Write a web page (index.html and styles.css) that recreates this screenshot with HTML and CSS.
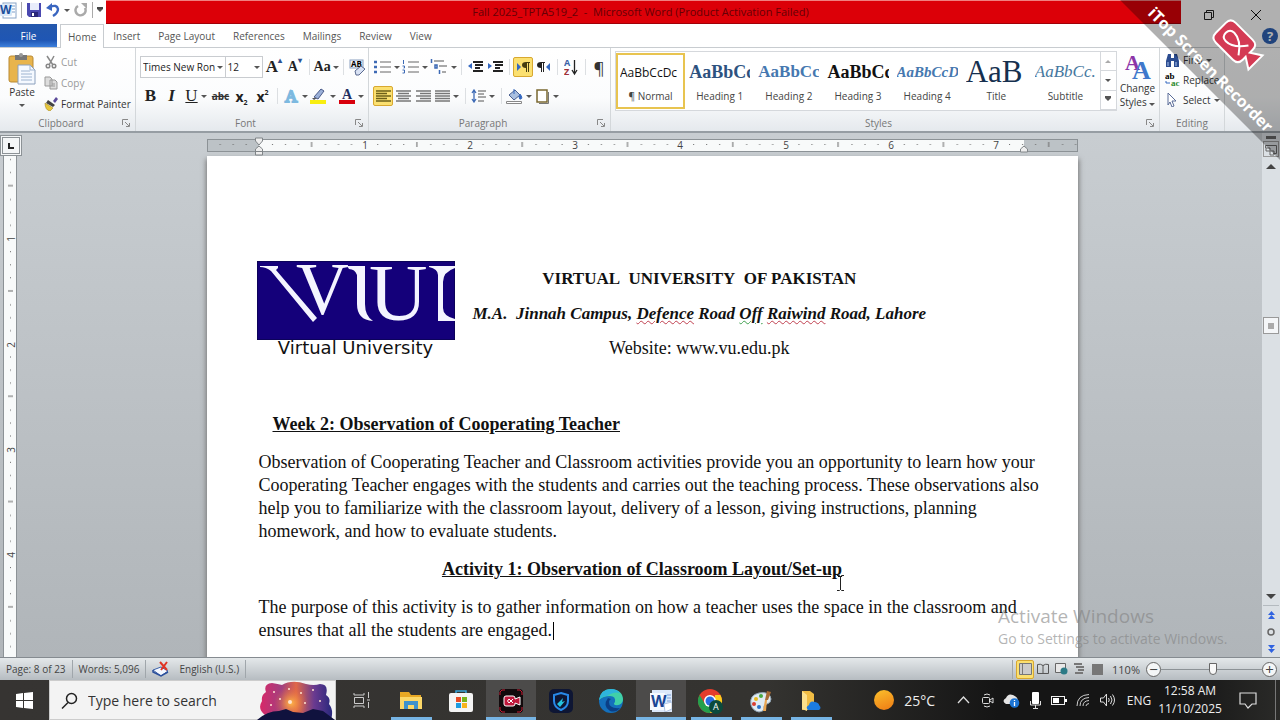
FILE: index.html
```
<!DOCTYPE html>
<html lang="en">
<head>
    <meta charset="UTF-8">
    <meta name="viewport" content="width=device-width, initial-scale=1.0">
    <title>Fall 2025_TPTA519_2 - Microsoft Word</title>
    <link rel="stylesheet" href="styles.css">
</head>
<body>
    <header class="titlebar">
        <div class="quick">
            <svg class="word-icon" width="17" height="17" viewBox="0 0 17 17"><rect x="3" y="1" width="13" height="15" fill="#fff" stroke="#8aa5c8"/><path d="M12 4h3M12 7h3M12 10h3" stroke="#7a9cc8"/><rect x="0" y="2" width="12" height="12" rx="1" fill="#dbe8f8"/><text x="0" y="12" font-size="12" font-weight="bold" fill="#1c4f9c">W</text></svg>
            <span class="bar"></span>
            <button aria-label="Save"><svg width="16" height="16" viewBox="0 0 16 16"><path d="M1 1h14v14H3l-2-2z" fill="#4a48b0"/><path d="M4 1h9v7H4z" fill="#e8ecfb"/><path d="M5 10h7v5H5z" fill="#2b2878"/><path d="M6 11h2v3H6z" fill="#fff"/></svg></button>
            <button class="undo" aria-label="Undo"><svg width="14" height="14" viewBox="0 0 14 14"><path d="M4 4q7-3 8 2q0 4-5 7" fill="none" stroke="#3a66c0" stroke-width="2.4"/><path d="M0 5l6-5v8z" fill="#3a66c0"/></svg><i class="caret"></i></button>
            <button aria-label="Repeat"><svg width="14" height="14" viewBox="0 0 14 14"><path d="M4 3A5 5 0 1 0 11 5" fill="none" stroke="#aaa" stroke-width="2.6"/><path d="M7 0h6v6z" fill="#aaa"/></svg></button>
            <span class="bar"></span>
            <button class="more" aria-label="Customize toolbar"><i class="caret"></i></button>
        </div>
        <h1 class="title">Fall 2025_TPTA519_2 &nbsp;-&nbsp; Microsoft Word (Product Activation Failed)</h1>
        <div class="controls">
            <button aria-label="Restore"><svg width="12" height="12" viewBox="0 0 12 12" fill="none" stroke="#222"><path d="M1.500 3.500h7v7h-7zM3.500 3.500v-2h7v7h-2"/></svg></button>
            <button aria-label="Close"><svg width="12" height="12" viewBox="0 0 12 12" stroke="#111"><path d="M1 1l10 10M11 1L1 11"/></svg></button>
        </div>
    </header>

    <nav class="tabs">
        <button class="file">File</button>
        <button class="active">Home</button>
        <button>Insert</button>
        <button>Page Layout</button>
        <button>References</button>
        <button>Mailings</button>
        <button>Review</button>
        <button>View</button>
        <span class="fill"></span>
        <button class="help" aria-label="Help"><svg width="16" height="16" viewBox="0 0 16 16"><circle cx="8" cy="8" r="8" fill="#2f62b4"/><text x="5" y="13" font-size="13" font-weight="bold" fill="#fff">?</text></svg></button>
    </nav>

    <main class="ribbon">
        <section class="group clipboard">
            <div class="group-body">
                <button class="big paste">
                    <svg width="28" height="32" viewBox="0 0 28 32"><rect x="1" y="3" width="24" height="26" rx="2" fill="#e8b44c" stroke="#b98a34"/><path d="M7 2h12v5H7z" fill="#777"/><circle cx="13" cy="2" r="2" fill="#999"/><path d="M10 12h12l5 5v14H10z" fill="#f5f9ff" stroke="#8ba0bd"/><path d="M22 12v5h5M13 18h9M13 21h11M13 24h11M13 27h11" fill="none" stroke="#9db4d0"/></svg>
                    Paste<i class="caret"></i>
                </button>
                <div class="stack">
                    <button class="off"><svg width="14" height="14" viewBox="0 0 14 14" fill="none" stroke="#888" stroke-width="1.500"><path d="M3 1l6 9M10 1L5 10"/><circle cx="4" cy="11" r="1.800"/><circle cx="10" cy="11" r="1.800"/></svg>Cut</button>
                    <button class="off"><svg width="14" height="14" viewBox="0 0 14 14" fill="#ddd" stroke="#999"><path d="M1 1h5l2 2v7H1zM6 4h5l2 2v7H6z"/><path d="M8 8h3M8 10h3"/></svg>Copy</button>
                    <button><svg width="14" height="14" viewBox="0 0 14 14"><path d="M9 4l3-4 2 2-3 4z" fill="#5b4a9a"/><path d="M4 3l7 5-2 2-7-4z" fill="#444"/><path d="M1 6l8 5-3 3q-5-1-5-8z" fill="#e8c83c" stroke="#a88a20" stroke-width=".6"/></svg>Format Painter</button>
                </div>
            </div>
            <div class="group-label"><span>Clipboard</span><svg class="launch" width="8" height="8" viewBox="0 0 8 8"><path d="M.5 6V.5H6M3 3l4 4M7.500 4v3.500H4" fill="none" stroke="#888"/></svg></div>
        </section>

        <section class="group font">
            <div class="group-body rows">
                <div class="row">
                    <label class="combo name"><select aria-label="Font"><option>Times New Ron</option></select><i class="caret"></i></label>
                    <label class="combo size"><select aria-label="Font size"><option>12</option></select><i class="caret"></i></label>
                    <button class="serif grow" aria-label="Grow font">A<sup>▴</sup></button>
                    <button class="serif shrink" aria-label="Shrink font">A<sup>▾</sup></button>
                    <span class="sep"></span>
                    <button class="serif case">Aa<i class="caret"></i></button>
                    <span class="sep"></span>
                    <button aria-label="Clear formatting"><svg width="17" height="17" viewBox="0 0 17 17"><rect x="1" y="1" width="13" height="8" fill="#eef3fb" stroke="#8aa0c0"/><text x="2" y="8" font-size="8" font-weight="bold">AB</text><path d="M6 12l6-5 4 3-6 6H7z" fill="#d9e2f4" stroke="#5a6a90"/></svg></button>
                </div>
                <div class="row">
                    <button class="serif b">B</button>
                    <button class="serif it">I</button>
                    <button class="serif un wide"><u>U</u><i class="caret"></i></button>
                    <button class="abc"><s>abc</s></button>
                    <button class="xs">x<sub>2</sub></button>
                    <button class="xs">x<sup>2</sup></button>
                    <span class="sep"></span>
                    <button class="wide" aria-label="Text effects"><svg width="16" height="16" viewBox="0 0 16 16"><text x="2" y="14" font-family="Liberation Serif" font-size="17" fill="#fff" stroke="#7db9e0" stroke-width="2">A</text></svg><i class="caret"></i></button>
                    <button class="wide" aria-label="Highlight"><svg width="17" height="16" viewBox="0 0 17 16"><path d="M4 9l7-8 3 2-6 8z" fill="#9ab0d8" stroke="#4a5a88"/><path d="M2 10h5l-3 2z" fill="#555"/><path d="M0 12h16v4H0z" fill="#f8ee10"/></svg><i class="caret"></i></button>
                    <button class="wide" aria-label="Font color"><svg width="16" height="16" viewBox="0 0 16 16"><text x="3" y="11" font-family="Liberation Serif" font-size="14" font-weight="bold" fill="#1f2f60">A</text><path d="M0 12h16v4H0z" fill="#d8000c"/></svg><i class="caret"></i></button>
                </div>
            </div>
            <div class="group-label"><span>Font</span><svg class="launch" width="8" height="8" viewBox="0 0 8 8"><path d="M.5 6V.5H6M3 3l4 4M7.500 4v3.500H4" fill="none" stroke="#888"/></svg></div>
        </section>

        <section class="group para">
            <div class="group-body rows">
                <div class="row">
                    <button class="wide" aria-label="Bullets"><svg width="17" height="14" viewBox="0 0 17 14"><path d="M0 2h3M0 7h3M0 12h3" stroke="#3d6ab5" stroke-width="2.500"/><path d="M6 2h11M6 7h11M6 12h11" stroke="#666"/></svg><i class="caret"></i></button>
                    <button class="wide" aria-label="Numbering"><svg width="17" height="14" viewBox="0 0 17 14"><path d="M1.500 0v4M.5 6h2v2h-1M.5 10h2v3h-2" fill="none" stroke="#3d6ab5"/><path d="M6 2h11M6 7h11M6 12h11" stroke="#666"/></svg><i class="caret"></i></button>
                    <button class="wide" aria-label="Multilevel list"><svg width="18" height="16" viewBox="0 0 18 16"><path d="M1.500 0v4M5 6h2v3H5zM9.500 11v4" fill="none" stroke="#3d6ab5" stroke-width="1.500"/><path d="M4 2h10M9 7h8M12 13h4" stroke="#555"/></svg><i class="caret"></i></button>
                    <span class="sep"></span>
                    <button aria-label="Decrease indent"><svg width="15" height="12" viewBox="0 0 15 12"><path d="M5 1h10M7 4h8M7 7h5M5 10h10" stroke="#222" stroke-width="1.800"/><path d="M0 5l4-3v6z" fill="#3468c0"/></svg></button>
                    <button aria-label="Increase indent"><svg width="15" height="12" viewBox="0 0 15 12"><path d="M5 1h10M7 4h8M7 7h5M5 10h10" stroke="#222" stroke-width="1.800"/><path d="M4 5L0 2v6z" fill="#3468c0"/></svg></button>
                    <span class="sep"></span>
                    <button class="on" aria-label="Left to right"><svg width="13" height="10" viewBox="0 0 13 10"><path d="M0 1l4 4-4 4z" fill="#3468c0"/><path d="M9 0h4v1h-1v9h-1V1h-1v9H9V6Q5 6 5 3t4-3z" fill="#443c10"/></svg></button>
                    <button aria-label="Right to left"><svg width="13" height="10" viewBox="0 0 13 10"><path d="M13 1L9 5l4 4z" fill="#3468c0"/><path d="M4 0h4v1H7v9H6V1H5v9H4V6Q0 6 0 3t4-3z" fill="#222"/></svg></button>
                    <span class="sep"></span>
                    <button aria-label="Sort"><svg width="14" height="17" viewBox="0 0 14 17"><text x="0" y="7" font-size="9" font-weight="bold" fill="#3a62a8">A</text><text x="0" y="16" font-size="9" font-weight="bold" fill="#a03038">Z</text><path d="M10.500 1v13M8 11l2.500 4 2.500-4" fill="none" stroke="#222" stroke-width="1.300"/></svg></button>
                    <span class="sep"></span>
                    <button class="pilcrow" aria-label="Show marks">¶</button>
                </div>
                <div class="row">
                    <button class="on" aria-label="Align left"><svg width="15" height="12" viewBox="0 0 15 12"><path d="M0 1h15M0 3.500h11M0 6h15M0 8.500h11M0 11h15" stroke="#6e6018" stroke-width="1.700"/></svg></button>
                    <button aria-label="Center"><svg width="15" height="12" viewBox="0 0 15 12"><path d="M0 1h15M2 3.500h11M0 6h15M2 8.500h11M0 11h15" stroke="#777" stroke-width="1.700"/></svg></button>
                    <button aria-label="Align right"><svg width="15" height="12" viewBox="0 0 15 12"><path d="M0 1h15M4 3.500h11M0 6h15M4 8.500h11M0 11h15" stroke="#777" stroke-width="1.700"/></svg></button>
                    <button class="wide" aria-label="Justify"><svg width="15" height="12" viewBox="0 0 15 12"><path d="M0 1h15M0 3.500h15M0 6h15M0 8.500h15M0 11h15" stroke="#777" stroke-width="1.700"/></svg><i class="caret"></i></button>
                    <span class="sep"></span>
                    <button class="wide" aria-label="Line spacing"><svg width="15" height="14" viewBox="0 0 15 14"><path d="M3 2v10M1 4l2-3 2 3M1 10l2 3 2-3" fill="none" stroke="#3d6ab5" stroke-width="1.300"/><path d="M7 2h8M7 5h6M7 8h8M7 12h6" stroke="#555"/></svg><i class="caret"></i></button>
                    <span class="sep"></span>
                    <button class="wide" aria-label="Shading"><svg width="17" height="16" viewBox="0 0 17 16"><path d="M3 7l6-5 5 5-6 5z" fill="#a9bfe0" stroke="#4a5f90"/><path d="M8 1v5M14 6q3 4 1 5t-2-3" stroke="#3468c0" fill="#3468c0"/><path d="M.5 13.500h15v2H.5z" fill="#fff" stroke="#888"/></svg><i class="caret"></i></button>
                    <button class="wide" aria-label="Borders"><svg width="14" height="15" viewBox="0 0 14 15"><rect x="1" y="1" width="10" height="12" fill="#fff" stroke="#7a6830" stroke-width="1.500"/><path d="M12.500 3v11.500H3" fill="none" stroke="#777"/></svg><i class="caret"></i></button>
                </div>
            </div>
            <div class="group-label"><span>Paragraph</span><svg class="launch" width="8" height="8" viewBox="0 0 8 8"><path d="M.5 6V.5H6M3 3l4 4M7.500 4v3.500H4" fill="none" stroke="#888"/></svg></div>
        </section>

        <section class="group styles">
            <div class="group-body">
                <div class="gallery">
                    <button class="style chosen"><b class="s-normal">AaBbCcDc</b>¶ Normal</button>
                    <button class="style"><b class="s-h1">AaBbCc</b>Heading 1</button>
                    <button class="style"><b class="s-h2">AaBbCc</b>Heading 2</button>
                    <button class="style"><b class="s-h3">AaBbCc</b>Heading 3</button>
                    <button class="style"><b class="s-h4">AaBbCcD</b>Heading 4</button>
                    <button class="style"><b class="s-title">AaB</b>Title</button>
                    <button class="style"><b class="s-sub">AaBbCc.</b>Subtitle</button>
                    <div class="gallery-nav">
                        <button aria-label="Up"><i class="caret up"></i></button>
                        <button aria-label="Down"><i class="caret"></i></button>
                        <button aria-label="More"><i class="caret line"></i></button>
                    </div>
                </div>
                <button class="big change">
                    <svg width="28" height="28" viewBox="0 0 28 28" font-family="Liberation Serif" font-weight="bold"><text x="1" y="17" font-size="21" fill="#8c35a8">A</text><text x="8" y="26" font-size="26" fill="#3f78cc">A</text></svg>
                    Change<span>Styles <i class="caret"></i></span>
                </button>
            </div>
            <div class="group-label"><span>Styles</span><svg class="launch" width="8" height="8" viewBox="0 0 8 8"><path d="M.5 6V.5H6M3 3l4 4M7.500 4v3.500H4" fill="none" stroke="#888"/></svg></div>
        </section>

        <section class="group editing">
            <div class="group-body">
                <div class="stack">
                    <button><svg width="15" height="13" viewBox="0 0 15 13"><path d="M3 0h3v4h3V0h3l2 7v6H9V7H6v6H1V7z" fill="#2b4c90"/><path d="M3 8v4M11 8v4" stroke="#a9c2ee"/></svg>Find<i class="caret"></i></button>
                    <button><svg width="15" height="14" viewBox="0 0 15 14" font-family="Liberation Serif" font-size="9" font-weight="bold"><text x="0" y="6">ab</text><text x="6" y="13" fill="#2c8a2c">ac</text><path d="M1 8v2h4" fill="none" stroke="#3468c0"/></svg>Replace</button>
                    <button><svg width="15" height="14" viewBox="0 0 15 14"><path d="M3 0l8 8-4 0 2 5-2 1-2-5-2 3z" fill="#fff" stroke="#5a6c98"/></svg>Select<i class="caret"></i></button>
                </div>
            </div>
            <div class="group-label"><span>Editing</span></div>
        </section>
    </main>

    <div class="workspace">
        <div class="vruler">
            <button class="tabstop" aria-label="Tab stop"><svg width="8" height="8" viewBox="0 0 8 8"><path d="M2 1v5h5" fill="none" stroke="#222" stroke-width="2"/></svg></button>
            <svg class="vscale" width="14" height="100%">
                <defs>
                    <pattern id="vticks" y="-23" width="14" height="105.300" patternUnits="userSpaceOnUse"><path d="M6 13.500h1M6 26.500h1M6 39.500h1M4 52.600h5M6 66.500h1M6 79.500h1M6 92.500h1" stroke="#666"/></pattern>
                </defs>
                <rect width="14" height="100%" fill="url(#vticks)"/>
                <g font-size="10" fill="#444" text-anchor="middle">
                    <text transform="translate(11 83) rotate(-90)">1</text>
                    <text transform="translate(11 189) rotate(-90)">2</text>
                    <text transform="translate(11 294) rotate(-90)">3</text>
                    <text transform="translate(11 399) rotate(-90)">4</text>
                </g>
            </svg>
        </div>

        <div class="canvas">
            <svg class="hruler" height="19">
                <defs>
                    <pattern id="hticks" x="52" width="105.300" height="19" patternUnits="userSpaceOnUse"><path d="M13 7.500h1M26 7.500h1M39 7.500h1M52.600 5v5M66 7.500h1M79 7.500h1M92 7.500h1" stroke="#666"/></pattern>
                </defs>
                <rect x=".5" y="2.500" width="870" height="12" fill="#bcc2c6" stroke="#8c9296"/>
                <rect x="52" y="3" width="765" height="11" fill="#f8fafa"/>
                <rect x="1" y="2" width="869" height="13" fill="url(#hticks)"/>
                <g font-size="10" fill="#444" text-anchor="middle">
                    <text x="158" y="12">1</text><text x="263" y="12">2</text><text x="368" y="12">3</text><text x="473" y="12">4</text><text x="579" y="12">5</text><text x="684" y="12">6</text><text x="789" y="12">7</text>
                </g>
                <path d="M48.500 1h7v3L52 8l-3.500-4zM52 9l3.500 3v6h-7v-6zM48.500 14.500h7M817 9l3.500 3v3h-7v-3z" fill="#eee" stroke="#808588"/>
            </svg>

            <article class="page">
                <div class="letterhead">
                    <div class="logo">
                        <svg width="198" height="79" viewBox="0 0 198 79" font-family="Liberation Serif" fill="#f4f4ff">
                            <rect width="198" height="79" fill="#14007a" stroke="#05043a"/>
                            <path d="M3 5h18v2l-2 2 41 48-4 4L14 10Q9 6 3 6z"/>
                            <text x="39" y="53" font-size="73">V</text>
                            <path d="M90 5h18v38q0 12 8 17-16-1-16-17V14q-2-6-8-6z"/>
                            <text x="112" y="59" font-size="81">U</text>
                            <path d="M198 5v2q-12 4-12 14v26q0 8 12 11v2h-17V14q0-6-9-8V5z"/>
                        </svg>
                        <span>Virtual University</span>
                    </div>
                    <div class="address">
                        <p class="uni">VIRTUAL&nbsp; UNIVERSITY&nbsp; OF PAKISTAN</p>
                        <p class="campus">M.A.&nbsp; Jinnah Campus, <u class="bad">Defence</u> Road <u class="gram">Off</u> <u class="bad">Raiwind</u> Road, Lahore</p>
                        <p>Website: www.vu.edu.pk</p>
                    </div>
                </div>
                <h2 class="week">Week 2: Observation of Cooperating Teacher</h2>
                <p>Observation of Cooperating Teacher and Classroom activities provide you an opportunity to learn how your<br>
                Cooperating Teacher engages with the students and carries out the teaching process. These observations also<br>
                help you to familiarize with the classroom layout, delivery of a lesson, giving instructions, planning<br>
                homework, and how to evaluate students.</p>
                <h2 class="activity">Activity 1: Observation of Classroom Layout/Set-up</h2>
                <p>The purpose of this activity is to gather information on how a teacher uses the space in the classroom and<br>
                ensures that all the students are engaged.<span class="cursor"></span></p>
            </article>
        </div>

        <div class="scroll">
            <span class="split"></span>
            <button class="toggle" aria-label="View ruler"><svg width="14" height="13" viewBox="0 0 14 13" fill="none" stroke="#666"><path d="M1.500 5V2.500h11v8H9M2 5h4v3H2zM6 8h4v4H6z"/></svg></button>
            <button aria-label="Scroll up"><i class="caret big-caret up"></i></button>
            <span class="before"></span>
            <button class="thumb" aria-label="Scroll position"></button>
            <span class="after"></span>
            <button aria-label="Scroll down"><i class="caret big-caret"></i></button>
            <div class="browse">
                <button aria-label="Previous page"><svg width="7" height="8" viewBox="0 0 7 8" fill="#2f62e0"><path d="M0 4l3.500-4L7 4zM0 8l3.500-4L7 8z"/></svg></button>
                <button aria-label="Browse object"><svg width="8" height="8" viewBox="0 0 8 8"><circle cx="4" cy="4" r="3" fill="none" stroke="#666" stroke-width="1.500"/></svg></button>
                <button aria-label="Next page"><svg width="7" height="8" viewBox="0 0 7 8" fill="#2f62e0"><path d="M0 0h7L3.500 4zM0 4h7L3.500 8z"/></svg></button>
            </div>
        </div>
    </div>

    <footer class="status">
        <button>Page: 8 of 23</button>
        <button>Words: 5,096</button>
        <button class="lang"><svg width="18" height="16" viewBox="0 0 18 16"><path d="M1 9l8-3 7 4-7 5z" fill="#f4f8ff" stroke="#3a60a8"/><path d="M1 9v2l8 4 7-4" fill="none" stroke="#2c509c" stroke-width="1.500"/><path d="M8 1l7 8M15 1L9 9" stroke="#e03424" stroke-width="2"/></svg>English (U.S.)</button>
        <span class="fill"></span>
        <div class="views">
            <button class="on" aria-label="Print layout"><svg width="13" height="12" viewBox="0 0 13 12"><path d="M.5.5h12v11H.5z" fill="#ccc" stroke="#777"/><path d="M3.500 1v10" stroke="#777"/></svg></button>
            <button aria-label="Full screen reading"><svg width="12" height="12" viewBox="0 0 12 12" fill="none" stroke="#555"><path d="M.5 1.500q3-1 5.500 1 2.500-2 5.500-1v9H.5zM6 2v9"/></svg></button>
            <button aria-label="Web layout"><svg width="13" height="12" viewBox="0 0 13 12"><path d="M.5.5h10v9H.5z" fill="#e8e8e8" stroke="#666"/><circle cx="9" cy="8" r="3.500" fill="#2b7a86"/></svg></button>
            <button aria-label="Outline"><svg width="12" height="12" viewBox="0 0 12 12"><path d="M1 1h8M3 4h8M5 7h6M2 10h8" stroke="#777" stroke-width="2"/></svg></button>
            <button aria-label="Draft"><svg width="11" height="11" viewBox="0 0 11 11"><path d="M0 0h11v11H0z" fill="#777"/></svg></button>
        </div>
        <button class="pct">110%</button>
        <button class="round" aria-label="Zoom out">−</button>
        <input class="zoom" type="range" min="0" max="100" value="52" aria-label="Zoom">
        <button class="round" aria-label="Zoom in">+</button>
    </footer>

    <div class="taskbar">
        <button class="start" aria-label="Start"><svg width="17" height="17" viewBox="0 0 17 17" fill="#fff"><path d="M0 2l7-1v7H0zM8 1l9-1v8H8zM0 9h7v7l-7-1zM8 9h9v8l-9-1z"/></svg></button>
        <label class="search">
            <svg width="17" height="17" viewBox="0 0 17 17" fill="none" stroke="#222" stroke-width="1.500"><circle cx="10.500" cy="6.500" r="5"/><path d="M7 10.500L1 16.500"/></svg>
            <input type="text" placeholder="Type here to search" aria-label="Search">
            <svg class="art" width="78" height="39" viewBox="0 0 78 39">
                <defs>
                    <linearGradient id="sky"><stop offset="0" stop-color="#d82868"/><stop offset=".3" stop-color="#a04080"/><stop offset=".5" stop-color="#e06848"/><stop offset=".75" stop-color="#6a3a90"/><stop offset="1" stop-color="#28287c"/></linearGradient>
                    <radialGradient id="glow"><stop offset="0" stop-color="#ffb848"/><stop offset="1" stop-color="#e86038" stop-opacity="0"/></radialGradient>
                </defs>
                <path d="M8 34Q0 28 5 20 4 14 9 11 6 3 15 2q6 1 10 2 10-6 24-1 8 2 14 0 9 0 6 11 5 3 3 9 5 6 2 16z" fill="url(#sky)"/>
                <circle cx="34" cy="22" r="17" fill="url(#glow)"/>
                <path d="M0 39q10-9 22-9l7-2 7 3 10 1 10-4 10 2 12 9z" fill="#10123e"/>
                <g fill="#ffe4d0"><circle cx="17" cy="11" r="1"/><circle cx="23" cy="18" r="1"/><circle cx="32" cy="8" r="1"/><circle cx="44" cy="12" r="1"/><circle cx="48" cy="22" r="1"/><circle cx="56" cy="9" r="1"/><circle cx="63" cy="20" r="1"/><circle cx="33" cy="21" r="2"/><circle cx="14" cy="24" r="1"/></g>
            </svg>
        </label>
        <button class="taskview" aria-label="Task view"><svg width="17" height="17" viewBox="0 0 17 17" fill="none" stroke="#ccc"><path d="M1 1v2h10V1M1.500 5.500h9v6h-9zM1 16v-2h10v2M15.500 0v6M15.500 10v6M14 8h3"/></svg></button>
        <nav class="apps">
            <button class="open" aria-label="File Explorer"><svg width="22" height="20" viewBox="0 0 22 20"><path d="M0 1h9l2 3h10v14H0z" fill="#e8a824"/><path d="M0 6h22v12H0z" fill="#fcd868"/><path d="M4 18v-8h14v8h-4v-4H8v4z" fill="#3f92cc"/></svg></button>
            <button aria-label="Store"><svg width="24" height="24" viewBox="0 0 24 24"><path d="M7 6V2h10v4" fill="none" stroke="#38a4d8" stroke-width="1.500"/><rect y="4" width="24" height="19" rx="2" fill="#f4f4f4"/><path d="M7 8h5v5H7z" fill="#e84a24"/><path d="M13 8h5v5h-5z" fill="#78b41c"/><path d="M7 14h5v5H7z" fill="#1c9ce0"/><path d="M13 14h5v5h-5z" fill="#f8b41c"/></svg></button>
            <button class="open lit" aria-label="iTop Screen Recorder"><svg width="24" height="24" viewBox="0 0 24 24"><rect width="24" height="24" rx="4" fill="#120a0c"/><path d="M1 6V3l2-2h3M18 1h3l2 2v3M1 18v3l2 2h3M18 23h3l2-2v-3" fill="none" stroke="#c81c34"/><path d="M7 7h7q2 0 2 2v1l5-2v8l-5-2v1q0 2-2 2H7q-2 0-2-2V9q0-2 2-2z" fill="#c0183c" stroke="#fff"/><path d="M14 10l-4 4q-3-2 0-4l4 4" fill="none" stroke="#fff"/></svg></button>
            <button aria-label="Security"><svg width="24" height="24" viewBox="0 0 24 24"><rect width="24" height="24" rx="5" fill="#0e1634"/><path d="M12 4l7 2v6q0 6-7 9-7-3-7-9V6z" fill="none" stroke="#2888e8" stroke-width="2"/><path d="M8 15l6-6-1 4 3-1-5 6" fill="#24c4e0"/></svg></button>
            <button aria-label="Edge"><svg width="24" height="24" viewBox="0 0 24 24"><circle cx="12" cy="12" r="12" fill="#1470bc"/><path d="M0 11Q2 0 12 0q12 1 12 11-1 6-8 5-2-1 0-3 1-6-5-6Q4 7 0 11z" fill="#40d0a8"/><path d="M0 11Q2 0 12 0q6 0 9 4-6-2-13 3-5 0-8 4z" fill="#2eb4dc"/><path d="M9 9q-6 8 2 13 6 2 10-3-11 1-11-6 0-2 2-3z" fill="#0b3f86"/></svg></button>
            <button class="open lit" aria-label="Word"><svg width="22" height="22" viewBox="0 0 22 22"><path d="M2 0h20v22H2z" fill="#dce8fa"/><path d="M0 3h15v17H0z" fill="#f5f9ff"/><path d="M17 5h4M17 8h4M17 11h4" stroke="#7ba0d8"/><text x="1" y="17" font-size="16" font-weight="bold" fill="#1a4594">W</text><path d="M14 14l8-2v7l-7 3z" fill="#fff" stroke="#b0c4e4"/></svg></button>
            <button class="open" aria-label="Chrome"><svg width="26" height="25" viewBox="0 0 26 25"><circle cx="12" cy="12" r="12" fill="#e43c2c"/><path d="M1.600 6A12 12 0 0 0 12 24l5-9-10 0z" fill="#24a04c"/><path d="M22.400 6A12 12 0 0 1 12 24l5-10V6z" fill="#fccc1c"/><circle cx="12" cy="12" r="6" fill="#fff"/><circle cx="12" cy="12" r="4.500" fill="#2a6ce0"/><circle cx="18" cy="18" r="7" fill="#0c4a3c"/><text x="15" y="21" font-size="9" fill="#fff">A</text></svg></button>
            <button class="open" aria-label="Paint"><svg width="24" height="24" viewBox="0 0 24 24"><path d="M2 16Q0 6 10 4q11-2 12 6 0 4-4 5t-3 4-5 4q-6-1-8-7z" fill="#dfeaf2" stroke="#90a4b4"/><circle cx="7" cy="10" r="2" fill="#e8b820"/><circle cx="12" cy="7" r="2" fill="#48a840"/><circle cx="5" cy="15" r="2" fill="#d83c30"/><circle cx="10" cy="18" r="2" fill="#2870c8"/><path d="M14 22l2-11 2 0-1 11z" fill="#e8a450"/><path d="M16 11l2-9 4 1-3 8z" fill="#a86a34"/></svg></button>
            <button class="open" aria-label="OneDrive folder"><svg width="20" height="22" viewBox="0 0 20 22"><path d="M1 1h8l4 3v16H1z" fill="#f0bc44"/><path d="M1 1l5 4v16l-5-2z" fill="#fce08c"/><path d="M7 20q-3-3 1-5 1-5 6-3 4 1 4 3 3 3 0 5z" fill="#1c7ce0"/></svg></button>
        </nav>
        <span class="fill"></span>
        <button class="weather"><i class="sun"></i>25°C</button>
        <div class="tray">
            <button aria-label="Show hidden icons"><svg width="13" height="8" viewBox="0 0 13 8" fill="none" stroke="#ddd" stroke-width="1.300"><path d="M1 7l5.500-6L12 7"/></svg></button>
            <button aria-label="Meet now"><svg width="13" height="15" viewBox="0 0 13 15" fill="none" stroke="#ddd"><rect x="1.500" y="4.500" width="7" height="6" rx="1"/><path d="M9 7l3-2v5L9 8M3 2q3-2 6 0M3 13q3 2 6 0"/></svg></button>
            <button aria-label="OneDrive"><svg width="17" height="15" viewBox="0 0 17 15"><path d="M3 11q-5-3 0-6 2-5 7-3 5 2 5 6v3z" fill="#e4e4e4"/><circle cx="11.500" cy="10" r="4.800" fill="#1c74d4"/><path d="M11.500 9v4M11.500 7v1" stroke="#fff" stroke-width="1.300"/></svg></button>
            <button aria-label="Microphone"><svg width="11" height="17" viewBox="0 0 11 17"><rect x="2" y="0" width="7" height="12" rx="1" fill="#fff"/><path d="M.5 9v4h10V9M5.500 13v3M3 16.500h5" fill="none" stroke="#ddd"/></svg></button>
            <button aria-label="Battery"><svg width="16" height="11" viewBox="0 0 16 11"><rect x=".5" y="1.500" width="13" height="8" fill="none" stroke="#eee"/><path d="M2 3h6v5H2zM14 4h2v3h-2z" fill="#fff"/></svg></button>
            <button aria-label="Wi-Fi"><svg width="14" height="14" viewBox="0 0 14 14" fill="none" stroke="#ccc"><path d="M1 13Q1 2 13 1.500M4 13q0-8 9-8.500M7 13q0-5 6-5.500M10 13q0-2 3-2.500"/></svg></button>
            <button aria-label="Volume"><svg width="15" height="14" viewBox="0 0 15 14" fill="none" stroke="#ddd"><path d="M.5 5h3l3-4v12l-3-4h-3zM8.500 5q1.500 2 0 4M10.500 3q3 4 0 8M12.500 1.500q4 5.500 0 11"/></svg></button>
            <button class="eng">ENG</button>
        </div>
        <button class="clock"><span>12:58 AM</span><span>11/10/2025</span></button>
        <button class="notes" aria-label="Notifications"><svg width="18" height="17" viewBox="0 0 18 17" fill="none" stroke="#ddd" stroke-width="1.200"><path d="M1 1h16v11h-4l-4 4-3-4H1z"/></svg></button>
        <span class="peek"></span>
    </div>

    <!-- things that float over the window -->
    <div class="activate"><strong>Activate Windows</strong>Go to Settings to activate Windows.</div>
    <svg class="ibeam" width="9" height="16" viewBox="0 0 9 16" fill="none" stroke="#222"><path d="M1 .5h2.500l1 1 1-1H8M1 15.500h2.500l1-1 1 1H8M4.500 1v14"/></svg>
    <svg class="ribbon-mark" width="160" height="160" viewBox="0 0 160 160">
        <path d="M0 0h160v160z" fill="#000" fill-opacity=".31"/>
        <text transform="translate(27 14) rotate(45)" font-family="Open Sans" font-size="16" font-weight="bold" fill="#fff">iTop Screen Recorder</text>
        <g transform="translate(115 42) rotate(45)" stroke="#fff" stroke-width="2">
            <path d="M-13-14h24q7 0 7 7v4l11-7V10L18 3v4q0 7-7 7h-24q-7 0-7-7V-7q0-7 7-7z" fill="#d43a54"/>
            <path d="M12-7Q3 6-7 6q-6 0-6-6t6-6Q3-6 12 7" fill="none"/>
        </g>
    </svg>
</body>
</html>
```
FILE: styles.css
```
*{
    box-sizing: border-box;
}
body{
    margin: 0;
    height: 100vh;
    display: flex;
    flex-direction: column;
    overflow: hidden;
    font-family: "Open Sans", sans-serif;
    font-size: 10px;
    color: #333;
    background-color: #fff;
}
button{
    display: flex;
    align-items: center;
    justify-content: center;
    padding: 0;
    border: 0;
    background: none;
    font: inherit;
    color: inherit;
    white-space: nowrap;
}
svg{
    flex: none;
}
p, h1, h2{
    margin: 0;
}
.fill{
    flex: 1;
}
.caret{
    display: inline-block;
    flex: none;
    border: 3px solid transparent;
    border-top-color: #555;
    border-bottom: 0;
}
.caret.up{
    border-top: 0;
    border-bottom: 3px solid #aaa;
}
.caret.line{
    box-shadow: 0 -2px 0 #555;
}
.caret.big-caret{
    border-width: 5px;
    border-top-color: #444;
    border-bottom: 0;
}
.caret.big-caret.up{
    border-top: 0;
    border-bottom: 5px solid #444;
}

/* title bar */
.titlebar{
    display: flex;
    height: 24px;
}
.quick{
    display: flex;
    align-items: center;
    gap: 4px;
    width: 106px;
    padding-bottom: 4px;
}
.quick .bar{
    width: 1px;
    height: 16px;
    background-color: #aaa;
}
.quick .undo{
    gap: 4px;
}
.quick .more .caret{
    box-shadow: 0 -2px 0 #444;
}
.title{
    flex: 1;
    padding-right: 6px;
    border-top: 1px solid #f08080;
    border-bottom: 1px solid #a00008;
    background-color: #dc0008;
    color: #650006;
    font-size: 11px;
    font-weight: normal;
    line-height: 22px;
    text-align: center;
}
.controls{
    display: flex;
    width: 99px;
    padding: 5px 0 0 4px;
}
.controls button{
    flex: 1;
}

/* tabs */
.tabs{
    display: flex;
    height: 24px;
    border-bottom: 1px solid #c8ccd0;
    color: #555;
}
.tabs button{
    padding: 0 9px;
}
.tabs .file{
    width: 57px;
    background: linear-gradient(#2458ac, #1f56b4 70%, #3e80dc);
    color: #fff;
}
.tabs .active{
    height: 24px;
    margin-left: 3px;
    padding: 0 7px;
    border: 1px solid #c8ccd0;
    border-bottom: 0;
    background-color: #fff;
}
.tabs .help{
    padding: 0 2px;
}

/* ribbon */
.ribbon{
    display: flex;
    height: 85px;
    border-bottom: 2px solid #969da3;
    background: linear-gradient(#fff, #fbfcfd 60%, #e5e9ed);
}
.group{
    display: flex;
    flex-direction: column;
    border-right: 1px solid #d3d7da;
}
.group-body{
    display: flex;
    flex: 1;
}
.group-label{
    display: flex;
    align-items: center;
    height: 16px;
    color: #777;
    text-align: center;
}
.group-label span{
    flex: 1;
}
.launch{
    margin-right: 5px;
}
.big{
    flex-direction: column;
    line-height: 14px;
}
.stack{
    display: flex;
    flex-direction: column;
}
.stack button{
    height: 21px;
    gap: 3px;
    justify-content: flex-start;
}
.off{
    color: #999;
}
.rows{
    flex-direction: column;
    gap: 7px;
    padding: 8px 0 0 4px;
}
.row{
    display: flex;
    align-items: center;
    height: 22px;
}
.row button{
    width: 21px;
    height: 20px;
}
.row .wide{
    width: 28px;
    gap: 3px;
}
.row .on, .views .on{
    border: 1px solid #d8a830;
    border-radius: 2px;
    background-color: #fbe070;
}
.sep{
    width: 1px;
    height: 16px;
    margin: 0 3px 0 4px;
    background-color: #dcdfe2;
}
.clipboard{
    width: 136px;
}
.paste{
    width: 44px;
    padding-bottom: 4px;
}
.paste .caret{
    margin-top: 5px;
}
.clipboard .stack{
    padding-top: 3px;
}
.font{
    width: 233px;
}
.combo{
    display: flex;
    align-items: center;
    height: 22px;
    padding: 0 2px;
    border: 1px solid #c9ccd0;
    background-color: #fff;
}
.combo select{
    flex: 1;
    min-width: 0;
    padding: 0;
    border: 0;
    background: none;
    appearance: none;
    font: inherit;
    color: #222;
}
.name{
    width: 86px;
}
.size{
    width: 38px;
    border-left: 0;
}
.serif{
    font-family: "Liberation Serif", serif;
    font-weight: bold;
    color: #222;
}
.row .serif{
    font-size: 17px;
}
.serif sup{
    align-self: flex-start;
    font-size: 8px;
    line-height: 8px;
    color: #2c5090;
}
.row .shrink{
    font-size: 14px;
}
.row .case{
    width: 26px;
    gap: 2px;
    font-size: 14px;
}
.row .it{
    font-style: italic;
}
.row .un{
    font-weight: normal;
}
.abc{
    font-weight: bold;
}
.xs{
    font-size: 14px;
    font-weight: bold;
    color: #222;
}
.xs sub, .xs sup{
    font-size: 7px;
    line-height: 7px;
}
.xs sub{
    align-self: flex-end;
}
.xs sup{
    align-self: flex-start;
    margin-top: 3px;
}
.para{
    width: 242px;
}
.para .row button{
    width: 20px;
}
.para .row .wide{
    width: 28px;
}
.para .row .pilcrow{
    font-size: 17px;
}
.styles{
    flex: 1;
    min-width: 0;
}
.styles .group-body{
    min-width: 0;
    padding: 3px 1px 4px 4px;
}
.gallery{
    display: flex;
    flex: 1;
    min-width: 0;
    border: 1px solid #d5d8dc;
    background-color: #fff;
}
.style{
    flex: 1 1 0;
    flex-direction: column;
    min-width: 0;
    padding: 0 2px 4px;
    border: 2px solid transparent;
    color: #444;
    margin: 1px 0;
}
.style b{
    display: flex;
    align-items: center;
    width: 100%;
    height: 34px;
    overflow: hidden;
    font-family: "Liberation Serif", serif;
    font-size: 18px;
}
.chosen{
    border-color: #e8c450;
}
.style .s-normal{
    font-family: "Open Sans", sans-serif;
    font-size: 12px;
    font-weight: normal;
    color: #111;
}
.s-h1{
    color: #2d527f;
}
.style .s-h2{
    font-size: 17px;
    color: #4678b0;
}
.s-h3{
    color: #111;
}
.style .s-h4{
    font-size: 15px;
    font-style: italic;
    color: #4678b0;
}
.style .s-title{
    font-size: 31px;
    font-weight: normal;
    color: #16304f;
}
.style .s-sub{
    font-size: 17px;
    font-style: italic;
    font-weight: normal;
    color: #4678a0;
}
.gallery-nav{
    display: flex;
    flex-direction: column;
    width: 16px;
    border-left: 1px solid #d5d8dc;
}
.gallery-nav button{
    flex: 1;
    border-bottom: 1px solid #d5d8dc;
}
.change{
    flex: none;
    width: 41px;
}
.editing{
    width: 65px;
    margin-right: 55px;
}
.editing .stack{
    padding: 2px 0 0 5px;
}
.editing .stack button{
    height: 20px;
}

/* document area */
.workspace{
    display: flex;
    flex: 1;
    min-height: 0;
    background: linear-gradient(#c8cdd1, #b0b5b9);
}
.vruler{
    display: flex;
    flex-direction: column;
    width: 22px;
    padding-top: 2px;
}
.tabstop{
    height: 21px;
    border: 3px double #8c9296;
    background-color: #f4f6f7;
}
.vscale{
    flex: 1;
    min-height: 0;
    margin-left: 3px;
    border: solid #8c9296;
    border-width: 0 1px;
    background-color: #f8fafa;
}
.canvas{
    display: flex;
    flex: 1;
    flex-direction: column;
    align-items: center;
    min-width: 0;
    padding-top: 4px;
    overflow: hidden;
}
.hruler{
    width: 100%;
    max-width: 871px;
}
.page{
    flex: 1;
    width: 100%;
    max-width: 871px;
    min-height: 0;
    padding: 105px 52px 0;
    background-color: #fff;
    box-shadow: 0 4px 5px 1px #777;
    font-family: "Liberation Serif", serif;
    font-size: 18px;
    line-height: 23px;
    color: #111;
    white-space: nowrap;
}
.letterhead{
    display: flex;
    gap: 12px;
    margin-left: -2px;
}
.logo{
    width: 198px;
    text-align: center;
}
.logo svg{
    display: block;
}
.logo span{
    display: block;
    font-family: "DejaVu Sans", sans-serif;
    font-size: 18px;
    line-height: 15px;
}
.address{
    padding: 6px 0 0 6px;
    text-align: center;
}
.address p{
    margin-bottom: 12px;
}
.address .uni, .address .campus{
    font-size: 17px;
    font-weight: bold;
}
.campus{
    font-style: italic;
}
.bad{
    text-decoration: underline wavy #c04050 1px;
}
.gram{
    text-decoration: underline wavy #40a050 1px;
}
.week, .activity{
    font-size: 18px;
    text-decoration: underline;
}
.week{
    margin: 41px 0 15px 14px;
}
.activity{
    margin: 15px 0;
    text-align: center;
}
.cursor{
    display: inline-block;
    width: 1px;
    height: 18px;
    margin-left: 1px;
    background-color: #000;
    vertical-align: -4px;
}

/* scroll bar */
.scroll{
    display: flex;
    flex-direction: column;
    align-items: center;
    width: 18px;
    padding-top: 3px;
    background-color: #dbe0e4;
}
.scroll button{
    width: 16px;
    height: 18px;
}
.split{
    width: 10px;
    height: 3px;
    background-color: #666;
}
.scroll .toggle{
    margin-top: 2px;
    height: 16px;
    border: 1px solid #999;
}
.before{
    flex: 36;
}
.after{
    flex: 64;
}
.scroll .thumb{
    height: 17px;
    border: 1px solid #999;
    background: linear-gradient(#aaa, #aaa) center / 6px 6px no-repeat #f4f6f8;
}
.browse{
    display: flex;
    flex-direction: column;
    border-top: 1px solid #b4babf;
}
.browse button{
    height: 17px;
}

/* status bar */
.status{
    display: flex;
    align-items: center;
    height: 23px;
    padding-right: 3px;
    border-top: 1px solid #858b90;
    background: linear-gradient(#e4e8ea, #b6bcc1);
    color: #444;
}
.status > button{
    height: 18px;
    padding: 0 6px;
}
.status > button:nth-child(-n+3){
    border-right: 1px solid #a0a6ab;
}
.status .lang{
    gap: 9px;
}
.status .pct{
    font-size: 11px;
}
.views{
    display: flex;
    border-left: 1px solid #a0a6ab;
}
.views button{
    width: 18px;
    height: 19px;
}
.views .on{
    margin-left: 3px;
}
.status .round{
    width: 15px;
    height: 15px;
    padding: 0;
    border: 1px solid #666;
    border-radius: 50%;
    background-color: #f4f6f7;
    font-size: 15px;
    line-height: 12px;
}
.zoom{
    width: 101px;
    height: 14px;
    margin: 0;
    appearance: none;
    background: linear-gradient(#8c9296, #8c9296) center / 100% 1px no-repeat;
}
.zoom::-webkit-slider-thumb{
    appearance: none;
    width: 8px;
    height: 12px;
    border: 1px solid #666;
    border-radius: 0 0 4px 4px;
    background-color: #f8f8f8;
}

/* taskbar */
.taskbar{
    display: flex;
    align-items: stretch;
    height: 40px;
    background: linear-gradient(90deg, #363432, #343330 60%, #151515 78%, #151515 92%, #2a2a28);
    color: #eee;
}
.start{
    width: 49px;
}
.search{
    display: flex;
    align-items: center;
    width: 287px;
    padding-left: 11px;
    border: 1px solid #ccc;
    background-color: #f3f3f3;
}
.search input{
    flex: 1;
    min-width: 0;
    padding: 0 0 0 10px;
    border: 0;
    background: none;
    font: inherit;
    font-size: 14px;
}
.search input::placeholder{
    color: #333;
}
.taskview{
    width: 50px;
}
.apps{
    display: flex;
}
.apps button{
    width: 50px;
    padding-top: 2px;
    background: linear-gradient(#76b4e4, #76b4e4) center bottom / 0 3px no-repeat;
}
.apps .open{
    background-size: 41px 3px;
}
.apps .lit{
    background-color: #4c4b4a;
    background-size: 100% 3px;
}
.weather{
    gap: 10px;
    margin-right: 16px;
    font-size: 14px;
}
.sun{
    width: 20px;
    height: 20px;
    border-radius: 50%;
    background: linear-gradient(160deg, #fbc02c, #ee7a14);
}
.tray{
    display: flex;
}
.tray button{
    width: 24px;
}
.tray .eng{
    width: 40px;
    font-size: 12px;
}
.clock{
    flex-direction: column;
    width: 62px;
    font-size: 12px;
    line-height: 18px;
}
.notes{
    width: 54px;
}
.peek{
    width: 5px;
    border-left: 1px solid #777;
}

/* overlays */
.activate{
    position: absolute;
    right: 53px;
    bottom: 72px;
    width: 229px;
    font-size: 14px;
    line-height: 18px;
    white-space: nowrap;
    color: rgba(130, 130, 130, .6);
}
.activate strong{
    display: block;
    font-size: 19px;
    font-weight: normal;
    line-height: 28px;
}
.ibeam{
    position: absolute;
    left: 836px;
    top: 575px;
}
.ribbon-mark{
    position: absolute;
    top: 0;
    right: 0;
}
```
